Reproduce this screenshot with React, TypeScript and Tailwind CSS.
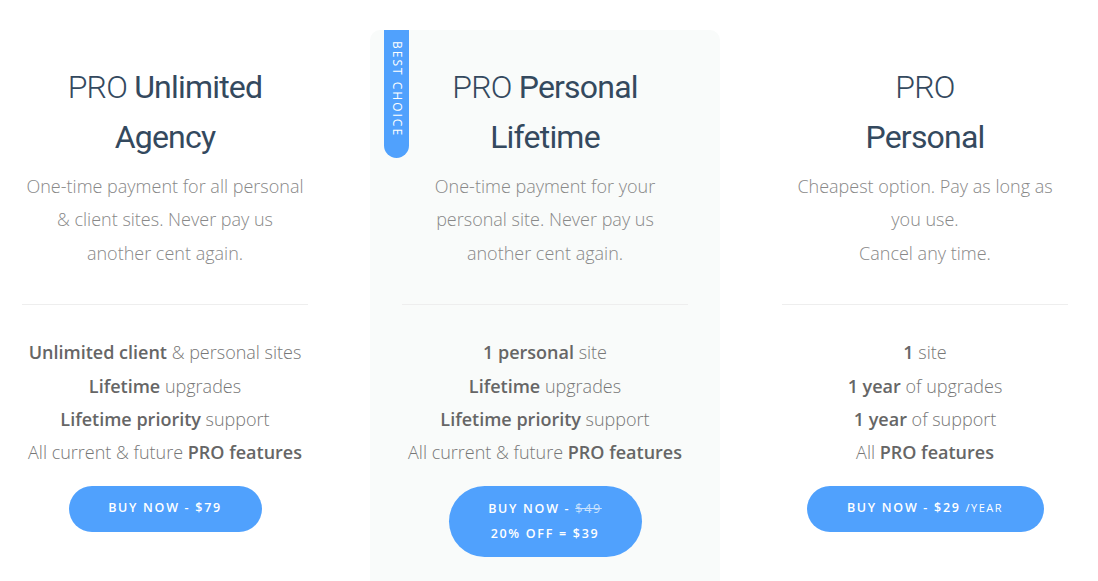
import React from "react";

const heading = "font-['Roboto',sans-serif] text-[32px] leading-[50px] tracking-[-0.8px] text-[#34495e]";
const body = "font-['Open_Sans',sans-serif] font-light text-[18px] leading-[33.4px]";

function Divider() {
  return <div className="mx-[32px] mt-[34px] h-px bg-[#eeeeee]" />;
}

function B({ children }: { children: React.ReactNode }) {
  return <span className="font-semibold text-[#666]">{children}</span>;
}

function Features({ lines }: { lines: React.ReactNode[] }) {
  return (
    <div className={`${body} mt-[31px] text-center text-[#777]`}>
      {lines.map((l, i) => (
        <div key={i}>{l}</div>
      ))}
    </div>
  );
}

function Btn({ className, children }: { className: string; children: React.ReactNode }) {
  return (
    <div className="mt-[16px] flex justify-center">
      <div
        className={`flex flex-col items-center justify-center rounded-full bg-[#50a1fd] font-['Open_Sans',sans-serif] text-[12.5px] font-semibold tracking-[1.7px] text-white ${className}`}
      >
        {children}
      </div>
    </div>
  );
}

export default function App() {
  return (
    <div className="h-[581px] w-[1098px] overflow-hidden bg-white">
      <div className="ml-[-25px] grid w-[1140px] grid-cols-3 pt-[30px]">
        {/* Column 1 */}
        <div className="px-[15px]">
          <div className="pt-[32px]">
            <div className={`${heading} text-center`}>
              <div>
                <span className="font-light">PRO</span> <span className="font-normal">Unlimited</span>
              </div>
              <div className="font-normal">Agency</div>
            </div>
            <div className={`${body} mt-[8px] text-center text-[#888]`}>
              <div>One-time payment for all personal</div>
              <div>&amp; client sites. Never pay us</div>
              <div>another cent again.</div>
            </div>
            <Divider />
            <Features
              lines={[
                <><B>Unlimited client</B> &amp; personal sites</>,
                <><B>Lifetime</B> upgrades</>,
                <><B>Lifetime priority</B> support</>,
                <>All current &amp; future <B>PRO features</B></>,
              ]}
            />
            <Btn className="h-[46px] w-[193px]">
              <span>BUY NOW - $79</span>
            </Btn>
          </div>
        </div>

        {/* Column 2 */}
        <div className="px-[15px]">
          <div className="relative h-[620px] rounded-t-[10px] bg-[#f9fbfa] pt-[32px]">
            <div className="absolute left-[14px] top-0 flex h-[128px] w-[25px] justify-center rounded-b-full bg-[#50a1fd] pt-[11px]">
              <span className="font-['Open_Sans',sans-serif] text-[12px] leading-[12px] tracking-[2px] text-white [writing-mode:vertical-rl]">
                BEST CHOICE
              </span>
            </div>
            <div className={`${heading} text-center`}>
              <div>
                <span className="font-light">PRO</span> <span className="font-normal">Personal</span>
              </div>
              <div className="font-normal">Lifetime</div>
            </div>
            <div className={`${body} mt-[8px] text-center text-[#888]`}>
              <div>One-time payment for your</div>
              <div>personal site. Never pay us</div>
              <div>another cent again.</div>
            </div>
            <Divider />
            <Features
              lines={[
                <><B>1 personal</B> site</>,
                <><B>Lifetime</B> upgrades</>,
                <><B>Lifetime priority</B> support</>,
                <>All current &amp; future <B>PRO features</B></>,
              ]}
            />
            <Btn className="h-[71px] w-[193px] leading-[25px]">
              <span>
                BUY NOW - <span className="font-normal text-[#c9e1fd] line-through">$49</span>
              </span>
              <span>20% OFF = $39</span>
            </Btn>
          </div>
        </div>

        {/* Column 3 */}
        <div className="px-[15px]">
          <div className="pt-[32px]">
            <div className={`${heading} text-center`}>
              <div className="font-light">PRO</div>
              <div className="font-normal">Personal</div>
            </div>
            <div className={`${body} mt-[8px] text-center text-[#888]`}>
              <div>Cheapest option. Pay as long as</div>
              <div>you use.</div>
              <div>Cancel any time.</div>
            </div>
            <Divider />
            <Features
              lines={[
                <><B>1</B> site</>,
                <><B>1 year</B> of upgrades</>,
                <><B>1 year</B> of support</>,
                <>All <B>PRO features</B></>,
              ]}
            />
            <Btn className="h-[46px] w-[237px]">
              <span>
                BUY NOW - $29 <span className="text-[11px] font-normal tracking-[1.5px]">/YEAR</span>
              </span>
            </Btn>
          </div>
        </div>
      </div>
    </div>
  );
}
